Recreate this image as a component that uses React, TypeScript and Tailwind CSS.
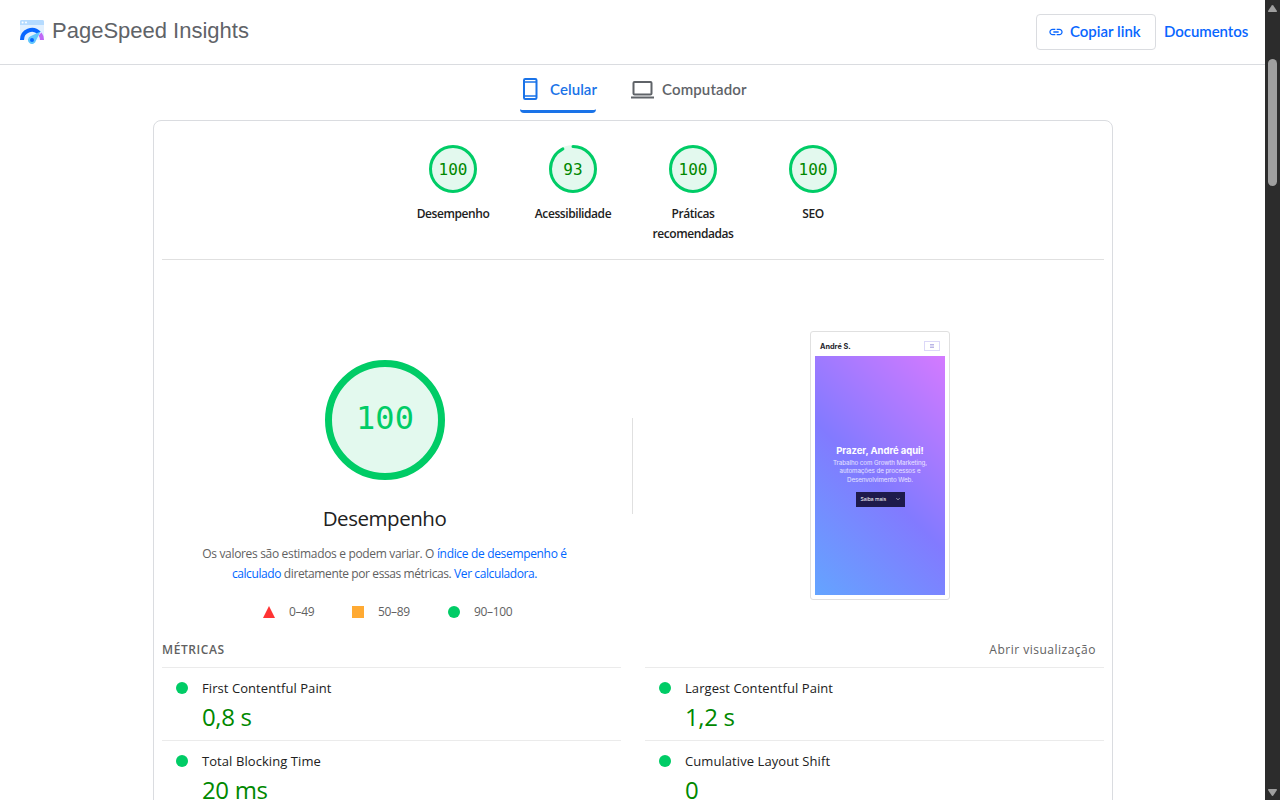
import React from "react";

const SANS = "font-['Open_Sans','Noto_Sans',sans-serif]";
const PRODUCT = "font-['Lato','Open_Sans',sans-serif]";

function Logo() {
  return (
    <svg className="h-6 w-6 shrink-0" viewBox="0 0 24 24">
      <path d="M1.500 0h21A1.500 1.500 0 0 1 24 1.500V20H0V1.500A1.500 1.500 0 0 1 1.500 0Z" fill="#e1f0ff" />
      <path d="M1.500 0h21A1.500 1.500 0 0 1 24 1.500V5H0V1.500A1.500 1.500 0 0 1 1.500 0Z" fill="#b5dbff" />
      <circle cx="2.600" cy="2.500" r="1" fill="#fff" />
      <circle cx="6" cy="2.500" r="1" fill="#fff" />
      <path d="M2 20a10 10 0 0 1 17.200-7" fill="none" stroke="#0866ff" strokeWidth="4" />
      <path d="M21.500 12.600A12 12 0 0 1 24 20h-4a8 8 0 0 0-1.500-4.600Z" fill="#c069f6" />
      <path d="M20.500 11.500 10.400 16.300A4 4 0 1 0 15.900 20.700Z" fill="#63c7fd" />
      <circle cx="12" cy="20" r="2" fill="#0866ff" />
    </svg>
  );
}

function Header() {
  return (
    <header className="flex h-[65px] shrink-0 items-start border-b border-[#dadce0] pl-5 pr-[17px]">
      <div className="flex h-16 items-center gap-2">
        <Logo />
        <span className="pb-0.5 font-['Liberation_Sans',sans-serif] text-[22px] leading-7 text-[#5f6368]">
          PageSpeed Insights
        </span>
      </div>
      <div className={`${PRODUCT} ml-auto flex h-16 items-center gap-2 text-[15px] font-semibold text-[#0866ff]`}>
        <button className="flex h-9 w-[120px] items-center rounded border border-[#dadce0] pl-[11px]">
          <svg className="h-4 w-4" viewBox="0 0 24 24" fill="currentColor">
            <path d="M3.900 12c0-1.710 1.390-3.100 3.100-3.100h4V7H7c-2.760 0-5 2.240-5 5s2.240 5 5 5h4v-1.900H7c-1.710 0-3.100-1.390-3.100-3.100zM8 13h8v-2H8v2zm9-6h-4v1.900h4c1.710 0 3.100 1.390 3.100 3.100s-1.390 3.100-3.100 3.100h-4V17h4c2.760 0 5-2.240 5-5s-2.240-5-5-5z" />
          </svg>
          <span className="ml-[6px] whitespace-nowrap pb-px">Copiar link</span>
        </button>
        <a className="w-[84px] whitespace-nowrap pb-px tracking-[-0.050px]">Documentos</a>
      </div>
    </header>
  );
}

function Tabs() {
  return (
    <nav className={`${PRODUCT} flex h-[55px] shrink-0 pl-[520px] text-[15px] font-semibold`}>
      <div className="flex h-12 w-[76px] items-center rounded-b-sm border-b-[3px] border-[#1a73e8] pt-0.5 text-[#1a73e8]">
        <svg className="mr-[9px] h-6 w-[21px] shrink-0" viewBox="0 0 21 24" fill="none" stroke="currentColor">
          <rect x="4" y="2" width="12.500" height="20" rx="1.200" strokeWidth="2" />
          <path d="M4 5h12.500M4 19h12.500" strokeWidth="1.300" />
        </svg>
        <span className="whitespace-nowrap pt-px tracking-[0.080px]">Celular</span>
      </div>
      <div className="ml-[34px] flex h-12 items-center border-b-[3px] border-transparent pt-0.5 text-[#5f6368]">
        <svg className="mr-2 h-6 w-6 shrink-0" viewBox="0 0 24 24" fill="none" stroke="currentColor" strokeWidth="2">
          <rect x="3.500" y="5" width="18" height="12.500" rx="1" />
          <path d="M1 20.500h23" />
        </svg>
        <span className="whitespace-nowrap pt-px tracking-[0.140px]">Computador</span>
      </div>
    </nav>
  );
}

const gauges = [
  { score: 100, label: "Desempenho" },
  { score: 93, label: "Acessibilidade" },
  { score: 100, label: "Práticas recomendadas" },
  { score: 100, label: "SEO" },
];

function Gauge({ score, label }: { score: number; label: string }) {
  const length = 2 * Math.PI * 22.5;
  return (
    <div className="flex w-[120px] flex-col items-center">
      <svg className="h-12 w-12" viewBox="0 0 48 48">
        <circle cx="24" cy="24" r="24" fill="#e3f9ee" />
        <circle
          cx="24"
          cy="24"
          r="22.500"
          fill="none"
          stroke="#0c6"
          strokeWidth="3"
          strokeLinecap={score < 100 ? "round" : "butt"}
          strokeDasharray={score < 100 ? `${(score / 100) * length - 1.5} ${length}` : undefined}
          transform="rotate(-90 24 24)"
        />
        <text
          x="24"
          y="30"
          textAnchor="middle"
          fill="#080"
          className="font-['DejaVu_Sans_Mono',monospace] text-[16px]"
        >
          {score}
        </text>
      </svg>
      <span className="mt-[11px] w-[90px] text-center text-[12px] font-semibold leading-5 tracking-[-0.420px] text-[#212121]">
        {label}
      </span>
    </div>
  );
}

function Summary() {
  return (
    <div className="flex w-[470px] flex-col items-center pt-[100px]">
      <svg className="ml-[-25px] h-[120px] w-[120px]" viewBox="0 0 120 120">
        <circle cx="60" cy="60" r="56.500" fill="#e3f9ee" stroke="#0c6" strokeWidth="7" />
        <text
          x="60"
          y="69"
          textAnchor="middle"
          fill="#0c6"
          className="font-['DejaVu_Sans_Mono',monospace] text-[32px]"
        >
          100
        </text>
      </svg>
      <h2 className="ml-[-25px] mt-6 text-[20.500px] leading-7 tracking-[-0.450px] text-[#212121]">Desempenho</h2>
      <p className="ml-[-25px] mt-3 whitespace-nowrap text-center text-[12px] leading-5 tracking-[-0.330px] text-[#616161]">
        Os valores são estimados e podem variar. O <a className="text-[#06f]">índice de desempenho é</a>
        <br />
        <span className="tracking-[-0.400px]">
          <a className="text-[#06f]">calculado</a> diretamente por essas métricas. <a className="text-[#06f]">Ver calculadora.</a>
        </span>
      </p>
      <div className="mt-[17px] flex w-full pl-[101px] text-[12px] leading-5 tracking-[-0.320px] text-[#616161]">
        <div className="flex w-[89px] items-center gap-[14px]">
          <svg className="h-3 w-3" viewBox="0 0 12 12">
            <path d="M6 0l6 12H0z" fill="#f33" />
          </svg>
          <span className="pt-px">0–49</span>
        </div>
        <div className="flex w-24 items-center gap-[14px]">
          <span className="h-3 w-3 bg-[#fa3]" />
          <span className="pt-px">50–89</span>
        </div>
        <div className="flex items-center gap-[14px]">
          <span className="h-3 w-3 rounded-full bg-[#0c6]" />
          <span className="pt-px">90–100</span>
        </div>
      </div>
    </div>
  );
}

function Screenshot() {
  return (
    <div className="ml-[177px] mt-[71px] h-[269px] w-[140px] rounded-[3px] border border-[#e0e0e0] p-1">
      <div className="flex h-full flex-col font-['Inter',sans-serif]">
        <div className="flex h-5 shrink-0 items-center justify-between pl-[5px] pr-[5px]">
          <span className="pt-px text-[7.300px] font-bold leading-3 text-[#25252c]">André S.</span>
          <span className="flex h-[10px] w-4 items-center justify-center border border-[#dcd8f8]">
            <svg className="h-1 w-1" viewBox="0 0 4 4" stroke="#aaa3df" strokeWidth=".8">
              <path d="M0 .5h4M0 2h4M0 3.500h4" />
            </svg>
          </span>
        </div>
        <div className="flex flex-1 flex-col items-center bg-[linear-gradient(45deg,#64a4ff_0%,#827aff_47%,#d47aff_100%)] pt-[88px] text-center text-white">
          <div className="whitespace-nowrap text-[9.500px] font-bold leading-[14px] tracking-[-0.050px]">Prazer, André aqui!</div>
          <p className="whitespace-nowrap pt-px text-[6.200px] leading-[8.300px] tracking-[-0.060px] text-white/80">
            Trabalho com Growth Marketing,
            <br />
            automações de processos e
            <br />
            Desenvolvimento Web.
          </p>
          <div className="mt-2 flex h-[15px] w-[49px] items-center justify-between bg-[#1e1a4b] px-[5px] text-[5px] leading-none">
            Saiba mais
            <svg className="h-1 w-1" viewBox="0 0 4 4" fill="none" stroke="white" strokeWidth=".6">
              <path d="M.4 1.200 2 2.800l1.600-1.600" />
            </svg>
          </div>
        </div>
      </div>
    </div>
  );
}

const metrics = [
  { name: "First Contentful Paint", value: "0,8 s" },
  { name: "Largest Contentful Paint", value: "1,2 s" },
  { name: "Total Blocking Time", value: "20 ms" },
  { name: "Cumulative Layout Shift", value: "0" },
];

function Metric({ name, value }: { name: string; value: string }) {
  return (
    <div className="flex h-[73px] border-t border-[#ebebeb] pl-[14px] pt-[10px]">
      <span className="mt-1 h-3 w-3 shrink-0 rounded-full bg-[#0c6]" />
      <div className="ml-[14px]">
        <div className="text-[13px] leading-5 tracking-[0.070px] text-[#212121]">{name}</div>
        <div className="mt-px text-[24px] leading-9 tracking-[-0.350px] text-[#080]">{value}</div>
      </div>
    </div>
  );
}

function Scrollbar() {
  return (
    <aside className="flex w-[15px] shrink-0 flex-col items-center bg-[#2c2c2c]">
      <svg className="mt-1 h-2 w-[9px]" viewBox="0 0 9 8" fill="#9f9f9f">
        <path d="M3.700 1.600a1 1 0 0 1 1.600 0L9 7q.2 1-.8 1H.8Q-.2 8 0 7z" />
      </svg>
      <span className="mt-[47px] h-[127px] w-[9px] rounded-full bg-[#9f9f9f]" />
      <svg className="mb-1 mt-auto h-[7px] w-[9px]" viewBox="0 0 9 7" fill="#9f9f9f">
        <path d="M3.700 6.500a1 1 0 0 0 1.600 0L9 1q.2-1-.8-1H.8Q-.2 0 0 1z" />
      </svg>
    </aside>
  );
}

export default function App() {
  return (
    <div className={`${SANS} flex h-[800px] w-[1280px] overflow-hidden bg-white`}>
      <div className="flex w-[1265px] flex-col overflow-hidden">
        <Header />
        <Tabs />
        <main className="ml-[153px] h-[760px] w-[960px] shrink-0 rounded-t-lg border border-[#dadce0] pl-2 pr-2">
          <section className="flex h-[139px] justify-center border-b border-[#e0e0e0] pt-6">
            {gauges.map((g) => (
              <Gauge key={g.label} {...g} />
            ))}
          </section>
          <section className="flex h-[374px] items-start">
            <Summary />
            <span className="mt-[158px] h-24 w-px bg-[#e0e0e0]" />
            <Screenshot />
          </section>
          <section>
            <div className="flex h-[33px] items-center justify-between pb-px pr-2 text-[12px] leading-5 text-[#616161]">
              <h3 className="font-semibold tracking-[0.600px]">MÉTRICAS</h3>
              <span className="tracking-[0.500px]">Abrir visualização</span>
            </div>
            <div className="grid grid-cols-2 gap-x-6">
              {metrics.map((m) => (
                <Metric key={m.name} {...m} />
              ))}
            </div>
          </section>
        </main>
      </div>
      <Scrollbar />
    </div>
  );
}
